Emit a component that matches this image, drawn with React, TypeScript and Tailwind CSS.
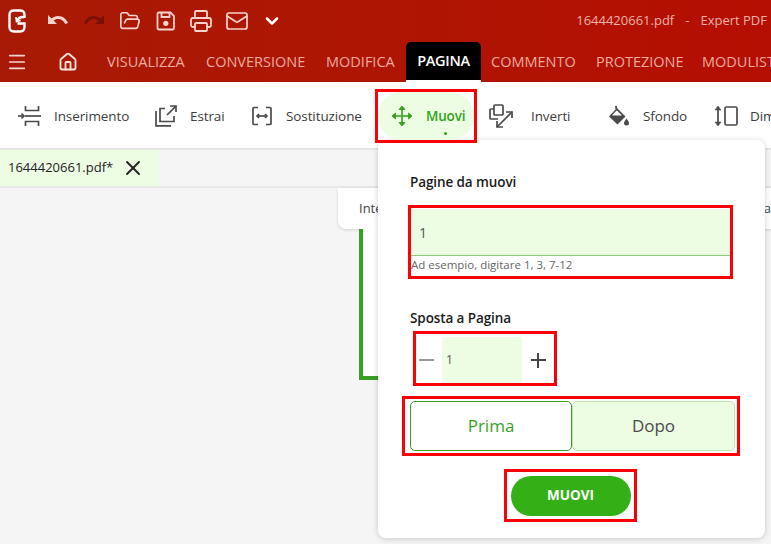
import React from 'react';
import { ChevronDown, FolderOpen, Home, Mail, Menu, Printer, X } from 'lucide-react';

const font = { fontFamily: '"Open Sans", "Noto Sans", sans-serif' };

const tabs = [
  { label: 'VISUALIZZA', cls: 'w-[79px]' },
  { label: 'CONVERSIONE', cls: 'w-[100px]' },
  { label: 'MODIFICA', cls: 'w-[70px]' },
];
const tabsAfter = [
  { label: 'COMMENTO', cls: 'w-[85px]' },
  { label: 'PROTEZIONE', cls: 'w-[86px]' },
  { label: 'MODULISTICA', cls: 'w-[100px]' },
];

const Logo = () => (
  <svg width="18" height="24" viewBox="0 0 18 24" fill="none" stroke="#fff" strokeWidth="2.4">
    <path d="M16 8.5 C13.5 7.5 11 8.5 9 11.5" />
    <path d="M8 8 L8.6 12.6 L12.6 11.4" strokeWidth="1.8" />
    <path d="M16.5 9 V6 C16.5 3 15 1.5 12 1.5 H6 C3 1.5 1.5 3 1.5 6 V18 C1.5 21 3 22.5 6 22.5 H12 C15 22.5 16.5 21 16.5 18 V14.5 H9.5" />
  </svg>
);

const UndoIcon = ({ color, flip }: { color: string; flip?: boolean }) => (
  <svg width="22" height="14" viewBox="0 0 22 14" fill={color} className={flip ? 'ml-[14px] -scale-x-100' : ''}>
    <path d="M1 1 V10 H10 L6.6 6.6 C8 5.5 9.5 5 11 5 C14.4 5 17 7 18.2 10 L21 9 C19.5 4.8 15.5 2 11 2 C8.6 2 6.3 2.9 4.5 4.5 Z" />
  </svg>
);

const SaveIcon = () => (
  <svg width="20" height="20" viewBox="0 0 20 20" fill="none" stroke="#f8d3cc" strokeWidth="1.8">
    <path d="M3 1.5 H14.5 L18 5 V17 C18 18 17.5 18.5 16.5 18.5 H3 C2 18.5 1.5 18 1.5 17 V3 C1.5 2 2 1.5 3 1.5 Z" />
    <path d="M5.5 2 V6 H13.5 V2" />
    <circle cx="9.8" cy="12.3" r="2.6" fill="#f8d3cc" stroke="none" />
  </svg>
);

const InsertIcon = () => (
  <svg width="26" height="22" viewBox="0 0 26 22" fill="none" stroke="#4a4a4a" strokeWidth="1.7">
    <path d="M8.5 1 V5.5 H21.5 V1" />
    <path d="M8.5 21 V16.5 H21.5 V21" />
    <path d="M8 11 H24" />
    <path d="M1 11 H6" />
    <path d="M4.5 8.5 L7 11 L4.5 13.5" />
  </svg>
);

const ExtractIcon = () => (
  <svg width="22" height="22" viewBox="0 0 22 22" fill="none" stroke="#4a4a4a" strokeWidth="1.7">
    <path d="M1 6 V20.8 H16" />
    <path d="M10 3.5 H5 V16.5 H19 V11" />
    <path d="M12 10 L20.5 1.5" />
    <path d="M15 1 H21 V7" />
  </svg>
);

const ReplaceIcon = () => (
  <svg width="20" height="20" viewBox="0 0 20 20" fill="none" stroke="#4a4a4a" strokeWidth="1.7">
    <path d="M6 1.5 H2 C1.5 1.5 1 2 1 2.5 V17.5 C1 18 1.5 18.5 2 18.5 H6" />
    <path d="M14 1.5 H18 C18.5 1.5 19 2 19 2.5 V17.5 C19 18 18.5 18.5 18 18.5 H14" />
    <path d="M5 10 H15" />
    <path d="M7 8 L5 10 L7 12 M13 8 L15 10 L13 12" />
  </svg>
);

const MoveIcon = () => (
  <svg width="22" height="22" viewBox="0 0 22 22" fill="#33a11c" stroke="#33a11c" strokeWidth="1.6">
    <path d="M11 2 V20 M2 11 H20" fill="none" />
    <path d="M8 4.5 L11 1 L14 4.5 Z M8 17.5 L11 21 L14 17.5 Z M4.5 8 L1 11 L4.5 14 Z M17.5 8 L21 11 L17.5 14 Z" strokeWidth="0.8" />
  </svg>
);

const InvertIcon = () => (
  <svg width="24" height="24" viewBox="0 0 24 24" fill="none" stroke="#4a4a4a" strokeWidth="1.7">
    <rect x="5" y="1" width="9" height="10" rx="1" />
    <path d="M5 5 H2 C1.5 5 1 5.5 1 6 V14 C1 14.5 1.5 15 2 15 H9" />
    <path d="M8 23 L23 8" />
    <path d="M8 17 V23 H14" />
    <path d="M17 8 H23 V14" />
  </svg>
);

const FillIcon = () => (
  <svg width="22" height="22" viewBox="0 0 22 22" fill="#4a4a4a" stroke="none">
    <path d="M7 1 L9 1 L9 3 L17.5 11.5 L9.5 19.5 L1 11.5 L7.5 4.5 Z M8.5 5.6 L4 10.5 H14 L9.5 6 Z" />
    <path d="M18.5 13.5 C19.5 15.3 21 16.5 21 18 A2.5 2.5 0 0 1 16 18 C16 16.5 17.5 15.3 18.5 13.5 Z" />
  </svg>
);

const SizeIcon = () => (
  <svg width="24" height="22" viewBox="0 0 24 22" fill="none" stroke="#4a4a4a" strokeWidth="1.7">
    <path d="M4 2 V20" />
    <path d="M1 5 L4 1 L7 5 Z M1 17 L4 21 L7 17 Z" fill="#4a4a4a" strokeWidth="0.6" />
    <rect x="11" y="2" width="12" height="18" rx="1.5" />
  </svg>
);

const RibbonItem = ({ icon, label, cls, labelCls = '' }: { icon: React.ReactNode; label: string; cls: string; labelCls?: string }) => (
  <div className={`flex items-center h-[48px] shrink-0 ${cls}`}>
    <div className="w-[48px] flex justify-center shrink-0">{icon}</div>
    <span className={`text-[13.5px] tracking-[-0.1px] text-[#3c3c3c] whitespace-nowrap ${labelCls}`}>{label}</span>
  </div>
);

export default function App() {
  return (
    <div className="relative w-[771px] h-[544px] overflow-hidden bg-[#f5f5f5] flex flex-col" style={font}>
      {/* title bar */}
      <div className="h-[82px] shrink-0 bg-gradient-to-r from-[#a81a05] to-[#b50e02]">
        <div className="h-[41px] flex items-center pl-[8px] pr-[4px]">
          <Logo />
          <div className="flex items-center ml-[21px]">
            <UndoIcon color="#f8d3cc" />
            <UndoIcon color="#7a1005" flip />
            <FolderOpen size={22} color="#f8d3cc" strokeWidth={1.8} className="ml-[14px]" />
            <div className="ml-[15px]"><SaveIcon /></div>
            <Printer size={24} color="#f8d3cc" strokeWidth={1.8} className="ml-[13px]" />
            <Mail size={24} color="#f8d3cc" strokeWidth={1.7} className="ml-[12px]" />
            <ChevronDown size={20} color="#fff" strokeWidth={3} className="ml-[13px]" />
          </div>
          <div className="ml-auto flex items-center text-[13px] text-[#eab2a8] whitespace-nowrap">
            <span>1644420661.pdf</span>
            <span className="mx-[11px]">-</span>
            <span>Expert PDF</span>
          </div>
        </div>
        <div className="h-[41px] flex items-center overflow-hidden">
          <Menu size={22} color="#f8d3cc" strokeWidth={1.8} className="ml-[6px] shrink-0" />
          <Home size={20} color="#fde4df" strokeWidth={2.2} className="ml-[30px] shrink-0" />
          <div className="flex items-center ml-[29px] gap-[20px] text-[14.5px] text-[#ecaaa0]">
            {tabs.map((t) => (
              <span key={t.label} className={`${t.cls} shrink-0 whitespace-nowrap`}>{t.label}</span>
            ))}
          </div>
          <div className="ml-[10px] mr-[10px] w-[75px] h-[40px] mt-px bg-black rounded-t-[5px] border-b-[2px] border-white text-white font-semibold text-[14.5px] tracking-[-0.3px] flex items-center justify-center shrink-0">
            PAGINA
          </div>
          <div className="flex items-center gap-[20px] text-[14.5px] text-[#ecaaa0]">
            {tabsAfter.map((t) => (
              <span key={t.label} className={`${t.cls} shrink-0 whitespace-nowrap`}>{t.label}</span>
            ))}
          </div>
        </div>
      </div>

      {/* ribbon */}
      <div className="h-[68px] shrink-0 bg-white border-b-[2px] border-[#e6e6e6] flex items-center pl-[6px] pt-[2px] overflow-hidden">
        <RibbonItem icon={<InsertIcon />} label="Inserimento" cls="w-[136px]" />
        <RibbonItem icon={<ExtractIcon />} label="Estrai" cls="w-[96px]" />
        <RibbonItem icon={<ReplaceIcon />} label="Sostituzione" cls="w-[131px]" />
        <div className="w-[108px] shrink-0" />
        <RibbonItem icon={<InvertIcon />} label="Inverti" labelCls="ml-[6px]" cls="w-[118px]" />
        <RibbonItem icon={<FillIcon />} label="Sfondo" cls="w-[107px]" />
        <RibbonItem icon={<SizeIcon />} label="Dimensione" cls="w-[100px]" />
      </div>

      {/* document tabs */}
      <div className="h-[38px] shrink-0 border-b-[2px] border-[#e8e8e8] flex">
        <div className="w-[159px] bg-[#ecfde4] flex items-center pl-[8px] text-[13px] text-[#222]">
          <span>1644420661.pdf*</span>
          <X size={24} color="#222" strokeWidth={1.9} className="ml-[8px]" />
        </div>
      </div>

      {/* page preview */}
      <div className="relative flex-1">
        <div className="absolute left-[338px] top-0 w-[460px] h-[41px] bg-white rounded-b-[8px] shadow-[0_1px_3px_rgba(0,0,0,0.15)] flex items-center justify-between pl-[21px] text-[13px] text-[#444]">
          <span>Inte</span>
          <span className="mr-[27px]">ta</span>
        </div>
        <div className="absolute left-[359px] top-[41px] w-[60px] h-[151px] bg-white border-[4px] border-t-0 border-[#389f22]" />
      </div>

      {/* active ribbon button */}
      <div className="absolute left-[375px] top-[89px] w-[102px] h-[54px] border-[3px] border-[#fb0007] z-20">
        <div className="h-full rounded-[24px] bg-[#ecfde4] flex items-center relative pl-[13px]">
          <MoveIcon />
          <span className="ml-[13px] text-[13.5px] tracking-[-0.2px] font-semibold text-[#33a11c]">Muovi</span>
          <span className="absolute left-[66px] bottom-[5px] w-[3px] h-[3px] rounded-full bg-[#33a11c]" />
        </div>
      </div>

      {/* move popup */}
      <div className="absolute left-[378px] top-[140px] w-[387px] h-[398px] bg-white rounded-[8px] shadow-[0_1px_6px_rgba(0,0,0,0.18)] z-10 pl-[32px] pt-[33px] flex flex-col items-start">
        <div className="text-[13.5px] font-semibold tracking-[-0.1px] text-[#1b1b1b] leading-[18px]">Pagine da muovi</div>
        <div className="mt-[14px] -ml-[2px] w-[325px] h-[74px] border-[3px] border-[#fb0007] pt-[1px]">
          <div className="h-[47px] bg-[#ecfde4] border-b border-[#8cc97c] flex items-center pl-[8px] text-[14px] text-[#555]">1</div>
          <div className="text-[11.5px] leading-[17px] text-[#666] whitespace-nowrap">Ad esempio, digitare 1, 3, 7-12</div>
        </div>
        <div className="mt-[30px] text-[13.5px] font-semibold tracking-[-0.1px] text-[#1b1b1b] leading-[18px]">Sposta a Pagina</div>
        <div className="mt-[4px] ml-[3px] w-[144px] h-[55px] border-[3px] border-[#fb0007] flex pt-[3px] items-stretch">
          <div className="w-[26px] flex items-center justify-start pl-[3px]">
            <span className="w-[15px] h-[2px] bg-[#999]" />
          </div>
          <div className="w-[80px] bg-[#ecfde4] flex items-center pl-[4px] text-[12px] text-[#555]">1</div>
          <div className="flex-1 flex items-center justify-center">
            <span className="relative w-[15px] h-[15px] block">
              <span className="absolute left-0 top-[6.5px] w-[15px] h-[2px] bg-[#444]" />
              <span className="absolute left-[6.5px] top-0 w-[2px] h-[15px] bg-[#444]" />
            </span>
          </div>
        </div>
        <div className="mt-[10px] -ml-[8px] w-[338px] h-[60px] border-[3px] border-[#fb0007] flex pl-[5px] pr-[2px] py-[2px]">
          <div className="w-[162px] h-[50px] bg-white border border-[#389f22] rounded-[5px] flex items-center justify-center text-[17px] text-[#38a31f]">Prima</div>
          <div className="flex-1 h-[50px] bg-[#ecfde4] border border-[#bfe8b2] rounded-[5px] flex items-center justify-center text-[17px] text-[#4a4a4a]">Dopo</div>
        </div>
        <div className="mt-[13px] ml-[94px] w-[133px] h-[53px] border-[3px] border-[#fb0007] flex items-center justify-center">
          <div className="w-[120px] h-[40px] rounded-full bg-[#33b016] text-white text-[13.5px] font-bold flex items-center justify-center">MUOVI</div>
        </div>
      </div>
    </div>
  );
}
